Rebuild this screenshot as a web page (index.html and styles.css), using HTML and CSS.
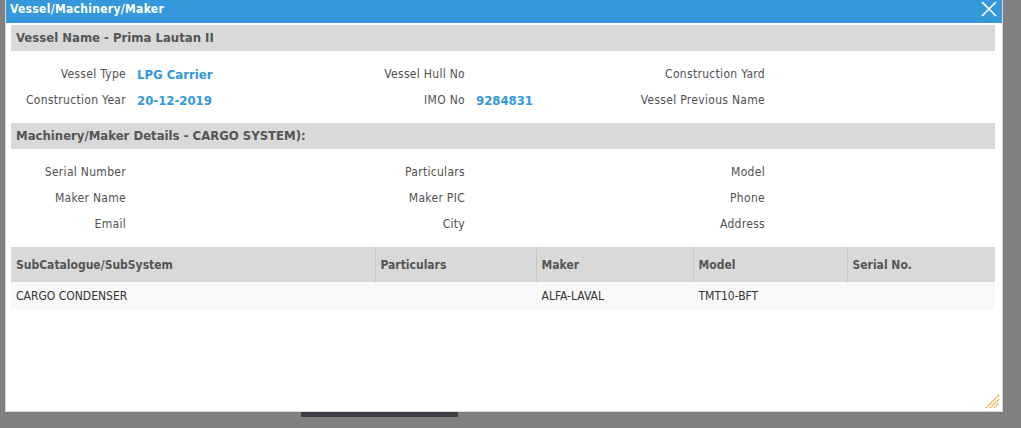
FILE: index.html
```html
<!DOCTYPE html>
<html>
<head>
<meta charset="utf-8">
<link rel="stylesheet" href="styles.css">
</head>
<body>
<div class="dialog">
  <div class="titlebar">
    <span class="title">Vessel/Machinery/Maker</span>
    <svg class="close" width="16" height="16" viewBox="0 0 16 16"><path d="M1 1L15 15M15 1L1 15" stroke="#fff" stroke-width="1.6" fill="none"/></svg>
  </div>
  <div class="body">
    <div class="section-head">Vessel Name - Prima Lautan II</div>
    <div class="fields">
      <div class="lbl">Vessel Type</div><div class="val">LPG Carrier</div>
      <div class="lbl">Vessel Hull No</div><div class="val"></div>
      <div class="lbl">Construction Yard</div><div class="val"></div>
      <div class="lbl">Construction Year</div><div class="val">20-12-2019</div>
      <div class="lbl">IMO No</div><div class="val">9284831</div>
      <div class="lbl">Vessel Previous Name</div><div class="val"></div>
    </div>
    <div class="section-head">Machinery/Maker Details - CARGO SYSTEM):</div>
    <div class="fields">
      <div class="lbl">Serial Number</div><div class="val"></div>
      <div class="lbl">Particulars</div><div class="val"></div>
      <div class="lbl">Model</div><div class="val"></div>
      <div class="lbl">Maker Name</div><div class="val"></div>
      <div class="lbl">Maker PIC</div><div class="val"></div>
      <div class="lbl">Phone</div><div class="val"></div>
      <div class="lbl">Email</div><div class="val"></div>
      <div class="lbl">City</div><div class="val"></div>
      <div class="lbl">Address</div><div class="val"></div>
    </div>
    <table class="grid">
      <colgroup>
        <col class="c1"><col class="c2"><col class="c3"><col class="c4"><col class="c5">
      </colgroup>
      <thead>
        <tr><th>SubCatalogue/SubSystem</th><th>Particulars</th><th>Maker</th><th>Model</th><th>Serial No.</th></tr>
      </thead>
      <tbody>
        <tr><td>CARGO CONDENSER</td><td></td><td>ALFA-LAVAL</td><td>TMT10-BFT</td><td></td></tr>
      </tbody>
    </table>
    <svg class="grip" width="15" height="15" viewBox="0 0 15 15">
      <path d="M1 14L14 1M5 14L14 5M9 14L14 9" stroke="#e0a020" stroke-width="1.5" stroke-dasharray="1.5 0.9" fill="none"/>
    </svg>
  </div>
</div>
<div class="pagebar"></div>
</body>
</html>
```
FILE: styles.css
```css
html, body {
  margin: 0;
  padding: 0;
}
body {
  background: #808080;
  font-family: "DejaVu Sans Condensed", "DejaVu Sans", sans-serif;
  font-size: 12px;
  color: #555;
  width: 1021px;
  height: 428px;
  overflow: hidden;
}
.dialog {
  margin-left: 5px;
  width: 996px;
  height: 411px;
  background: #fff;
  border: 1px solid #d8d8d8;
  border-top: none;
  display: flex;
  flex-direction: column;
}
.titlebar {
  height: 23px;
  background: #3498db;
  display: flex;
  align-items: flex-start;
  justify-content: space-between;
  padding: 0 5px 0 4px;
}
.title {
  color: #fff;
  font-weight: bold;
  font-size: 12px;
  letter-spacing: 0.3px;
  line-height: 16px;
  padding-top: 1px;
}
.close {
  margin-top: 1px;
}
.body {
  flex: 1;
  position: relative;
  padding: 2px 7px 0 5px;
}
.section-head {
  height: 26px;
  line-height: 26px;
  background: #d9d9d9;
  padding-left: 5px;
  font-weight: bold;
  font-size: 13px;
  color: #555;
}
.fields {
  display: grid;
  grid-template-columns: 126px 214px 125px 154px 146px 1fr;
  grid-auto-rows: 26px;
  padding: 10px 0;
  align-items: center;
}
.lbl {
  text-align: right;
  padding-right: 11px;
  white-space: nowrap;
  letter-spacing: 0.3px;
  color: #505050;
}
.val {
  color: #3498db;
  font-weight: bold;
  font-size: 13px;
  white-space: nowrap;
}
.grid {
  width: 984px;
  border-collapse: collapse;
  table-layout: fixed;
}
.c1 { width: 364px; }
.c2 { width: 161px; }
.c3 { width: 157px; }
.c4 { width: 154px; }
.c5 { width: 148px; }
.grid th {
  height: 35px;
  background: #d9d9d9;
  text-align: left;
  font-weight: bold;
  color: #555;
  padding: 0 5px;
  border-left: 1px solid #c6c6c6;
}
.grid th:first-child {
  border-left: none;
}
.grid td {
  height: 28px;
  background: #f8f8f8;
  padding: 0 5px;
  color: #333;
  border-left: 1px solid #f8f8f8;
}
.grid td:first-child {
  border-left: none;
}
.grip {
  position: absolute;
  right: 2px;
  bottom: 2px;
}
.pagebar {
  margin-left: 301px;
  width: 157px;
  height: 5px;
  background: #3b3e43;
}
```
